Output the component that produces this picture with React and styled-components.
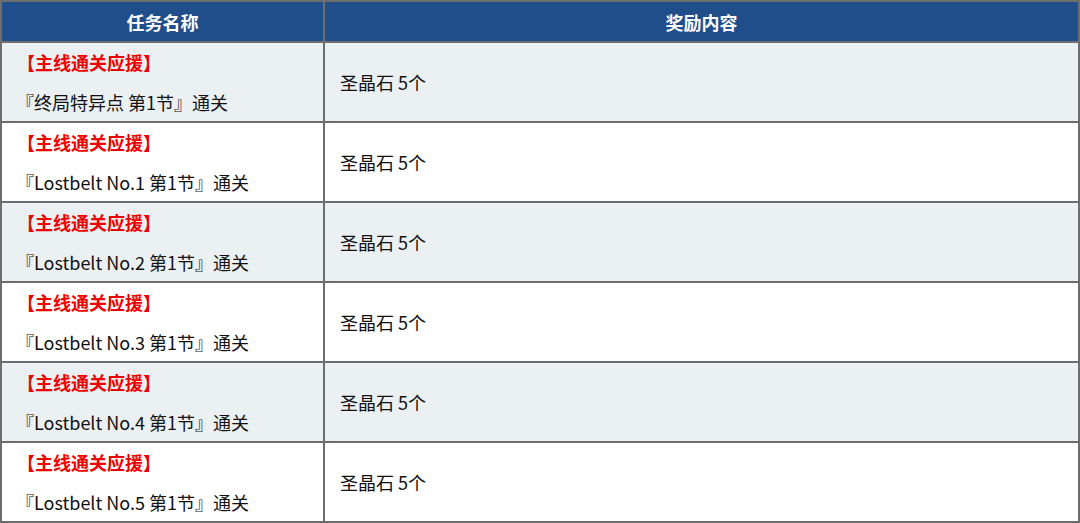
import React from "react";
import styled, { createGlobalStyle } from "styled-components";

const GlobalStyle = createGlobalStyle`
  html, body {
    margin: 0;
    padding: 0;
    background: #ffffff;
  }
  body {
    font-family: "Noto Sans CJK SC", "Noto Sans", sans-serif;
  }
`;

const missions = [
  { name: "『终局特异点 第1节』通关", reward: "圣晶石 5个" },
  { name: "『Lostbelt No.1 第1节』通关", reward: "圣晶石 5个" },
  { name: "『Lostbelt No.2 第1节』通关", reward: "圣晶石 5个" },
  { name: "『Lostbelt No.3 第1节』通关", reward: "圣晶石 5个" },
  { name: "『Lostbelt No.4 第1节』通关", reward: "圣晶石 5个" },
  { name: "『Lostbelt No.5 第1节』通关", reward: "圣晶石 5个" },
];

export default function App() {
  return (
    <>
      <GlobalStyle />
      <StyledTable>
        <colgroup>
          <col style={{ width: "323px" }} />
          <col />
        </colgroup>
        <thead>
          <tr>
            <StyledHeadCell>任务名称</StyledHeadCell>
            <StyledHeadCell>奖励内容</StyledHeadCell>
          </tr>
        </thead>
        <tbody>
          {missions.map((mission, index) => (
            <StyledRow key={index} $shaded={index % 2 === 0}>
              <StyledCell>
                <StyledNameBlock>
                  <StyledTag>【主线通关应援】</StyledTag>
                  <StyledName>{mission.name}</StyledName>
                </StyledNameBlock>
              </StyledCell>
              <StyledRewardCell>{mission.reward}</StyledRewardCell>
            </StyledRow>
          ))}
        </tbody>
      </StyledTable>
    </>
  );
}

const StyledTable = styled.table`
  width: 1080px;
  table-layout: fixed;
  border-collapse: separate;
  border-spacing: 0;
  border-top: 2px solid #6d6d6d;
  border-left: 2px solid #6d6d6d;
  box-sizing: border-box;
`;

const StyledHeadCell = styled.th`
  height: 41px;
  padding: 0;
  background: #1f4e8b;
  color: #ffffff;
  font-size: 18px;
  font-weight: 700;
  text-align: center;
  vertical-align: middle;
  border-right: 2px solid #6d6d6d;
  border-bottom: 2px solid #6d6d6d;
  box-sizing: border-box;
`;

const StyledRow = styled.tr`
  background: ${({ $shaded }) => ($shaded ? "#ebf0f3" : "#ffffff")};
`;

const StyledCell = styled.td`
  height: 80px;
  padding: 0 0 0 14px;
  vertical-align: middle;
  border-right: 2px solid #6d6d6d;
  border-bottom: 2px solid #6d6d6d;
  box-sizing: border-box;
`;

const StyledRewardCell = styled(StyledCell)`
  padding-left: 15px;
  font-size: 18px;
  color: #111111;
`;

const StyledNameBlock = styled.div`
  display: flex;
  flex-direction: column;
  align-items: flex-start;
  gap: 16px;
`;

const StyledTag = styled.span`
  color: #ee0000;
  font-size: 18px;
  font-weight: 700;
  line-height: 24px;
  margin-left: 1px;
`;

const StyledName = styled.span`
  color: #111111;
  font-size: 18px;
  line-height: 24px;
`;
